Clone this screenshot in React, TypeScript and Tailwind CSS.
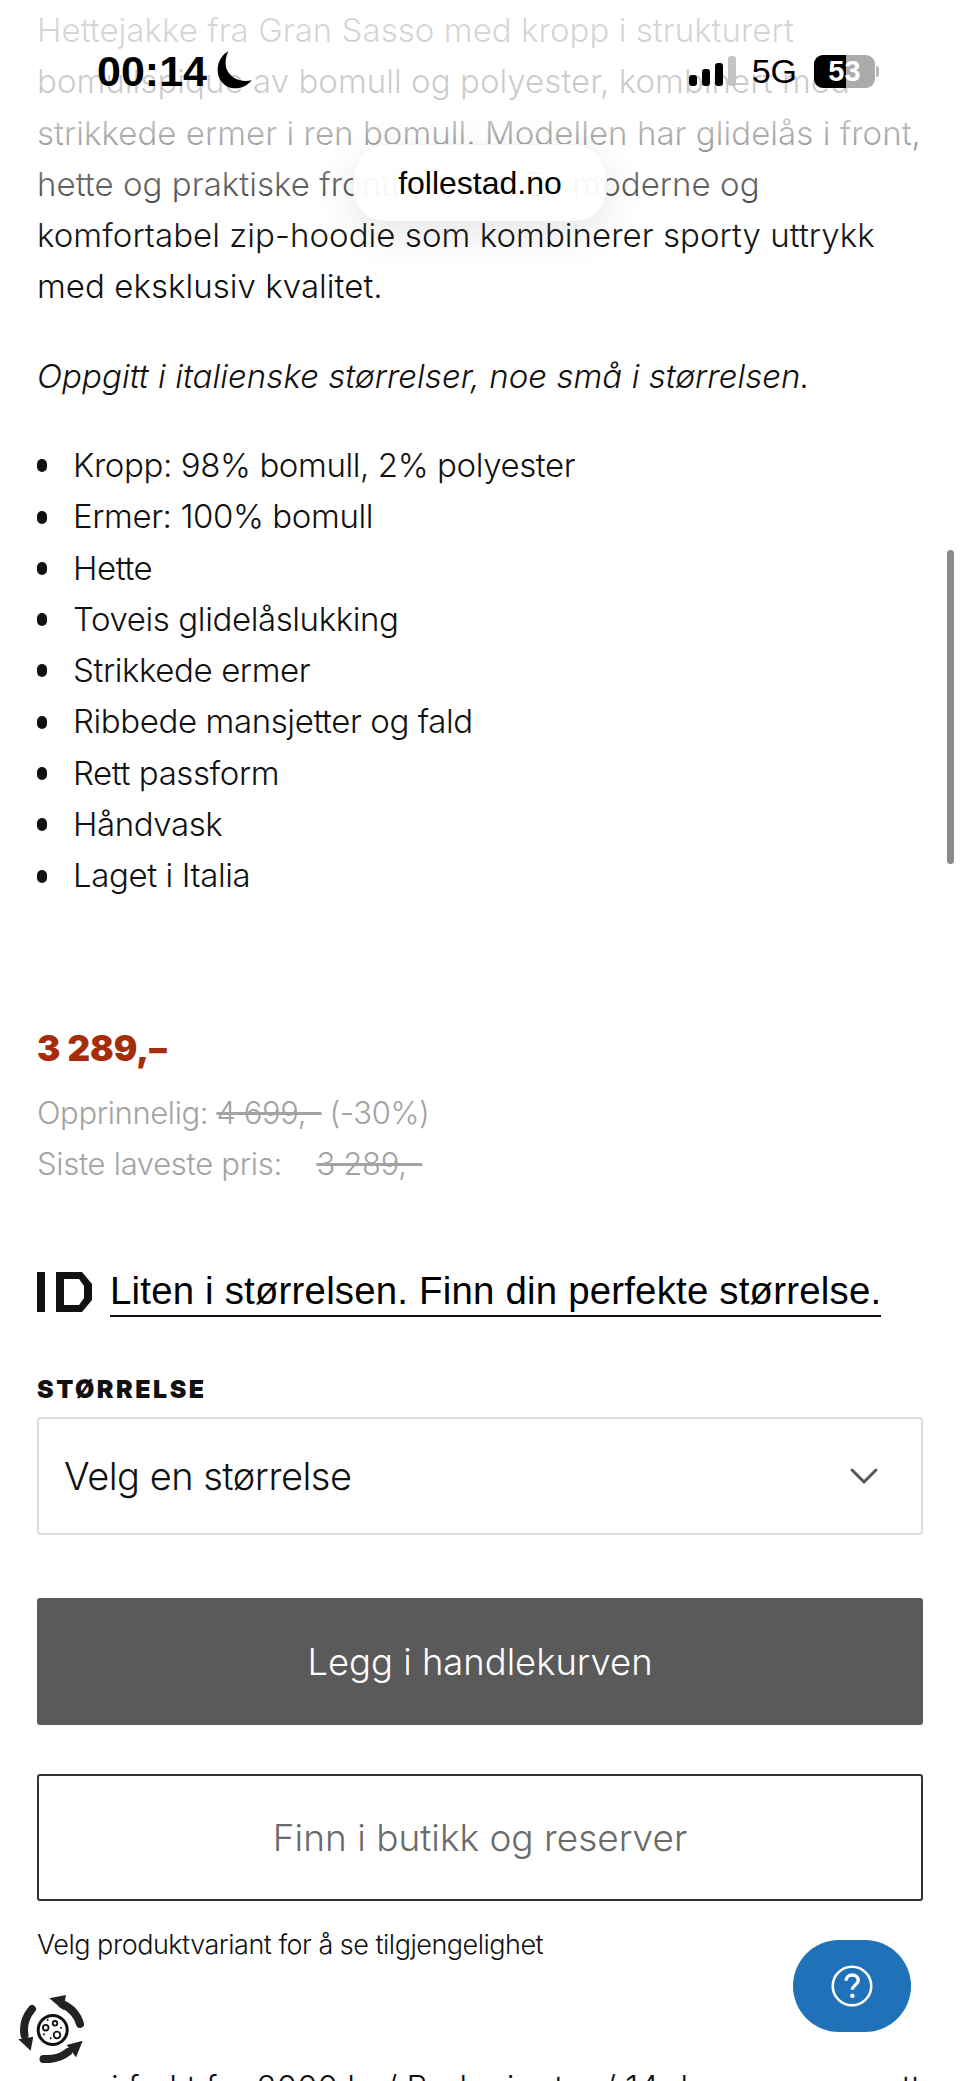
const bullets = [
  'Kropp: 98% bomull, 2% polyester',
  'Ermer: 100% bomull',
  'Hette',
  'Toveis glidelåslukking',
  'Strikkede ermer',
  'Ribbede mansjetter og fald',
  'Rett passform',
  'Håndvask',
  'Laget i Italia',
];

const RecycleIcon = () => (
  <svg width="66" height="68" viewBox="0 0 66 68" fill="none">
    <circle cx="34.7" cy="35" r="14.5" stroke="#111" strokeWidth="3" />
    <circle cx="27.7" cy="32.7" r="2.8" stroke="#111" strokeWidth="1.8" />
    <circle cx="37" cy="28.3" r="2.3" stroke="#111" strokeWidth="1.8" />
    <circle cx="39" cy="40" r="3.3" stroke="#111" strokeWidth="1.8" />
    <circle cx="29.7" cy="25" r="1" fill="#111" />
    <circle cx="43" cy="32.7" r="1" fill="#111" />
    <circle cx="32.7" cy="43.3" r="1" fill="#111" />
    <circle cx="26" cy="39.3" r="1" fill="#111" />
    <path d="M44 9 Q58 15 62 29" stroke="#222" strokeWidth="8" strokeLinecap="round" />
    <path d="M31.3 3.3 L48 0 L45.3 15 Z" fill="#222" />
    <path d="M14 14 Q4 26 6.5 40" stroke="#222" strokeWidth="8" strokeLinecap="round" />
    <path d="M0.3 44.3 L15.3 41.7 L12.7 55.7 Z" fill="#222" />
    <path d="M25.5 64 Q40 65 50 57" stroke="#222" strokeWidth="8" strokeLinecap="round" />
    <path d="M48.7 50 L64.7 45.7 L58 62.3 Z" fill="#222" />
  </svg>
);

export default function App() {
  return (
    <div className="relative h-[2081px] w-[960px] overflow-hidden bg-white font-['Inter',sans-serif] text-[#111]">
      <div className="px-[37px] pt-[5px]">
        <p className="text-[33px] leading-[51.3px] font-light tracking-[0.05px] whitespace-nowrap">
          Hettejakke fra Gran Sasso med kropp i strukturert
          <br />
          bomullspique av bomull og polyester, kombinert med
          <br />
          strikkede ermer i ren bomull. Modellen har glidelås i front,
          <br />
          hette og praktiske frontlommer. En moderne og
          <br />
          komfortabel zip-hoodie som kombinerer sporty uttrykk
          <br />
          med eksklusiv kvalitet.
        </p>
        <p className="mt-[38px] text-[33px] leading-[51.3px] font-light italic tracking-[0.05px] whitespace-nowrap">
          Oppgitt i italienske størrelser, noe små i størrelsen.
        </p>
        <ul className="mt-[38px]">
          {bullets.map((b) => (
            <li key={b} className="flex h-[51.3px] items-center text-[33px] font-light tracking-[-0.4px]">
              <span className="mr-[26px] h-[13px] w-[10px] rounded-full bg-[#111]" />
              {b}
            </li>
          ))}
        </ul>

        <div className="mt-[124px] text-[35px] leading-[44px] font-black text-[#a52d0c]">3 289,–</div>
        <div className="mt-[17px] text-[31px] leading-[51.3px] font-light tracking-[-0.4px] text-[#a3a3a3]">
          Opprinnelig: <span className="line-through">4 699,–</span> (-30%)
        </div>
        <div className="text-[31px] leading-[51.3px] font-light tracking-[-0.3px] text-[#a3a3a3]">
          Siste laveste pris: <span className="ml-[26px] line-through">3 289,–</span>
        </div>

        <div className="mt-[78px] flex items-center">
          <svg width="56" height="42" viewBox="0 0 56 42" className="mr-[17px] shrink-0">
            <rect x="0" y="1" width="8" height="40" fill="#111" />
            <path fillRule="evenodd" d="M19 1 H45 L55 13 V29 L45 41 H19 Z M27 8 V34 H42 L47 27 V15 L42 8 Z" fill="#111" />
          </svg>
          <span className="border-b-2 border-[#111] font-['Liberation_Sans',sans-serif] text-[38.4px] leading-[48px] tracking-[0.2px] whitespace-nowrap text-black">
            Liten i størrelsen. Finn din perfekte størrelse.
          </span>
        </div>

        <div className="mt-[57px] text-[25px] leading-[30px] font-black tracking-[2.5px] text-[#111]">STØRRELSE</div>
        <div className="mt-[13px] flex h-[118px] items-center justify-between rounded-[4px] border-2 border-[#dddddd] pr-[42px] pl-[25px] text-[38px] font-light tracking-[-0.5px]">
          Velg en størrelse
          <svg width="30" height="20" viewBox="0 0 30 20" fill="none">
            <path d="M3 4 L15 16 L27 4" stroke="#555" strokeWidth="3" strokeLinecap="round" />
          </svg>
        </div>
        <button className="mt-[63px] flex h-[127px] w-full items-center justify-center rounded-[3px] bg-[#5a5a5a] text-[36.4px] font-light text-white">
          Legg i handlekurven
        </button>
        <button className="mt-[49px] flex h-[127px] w-full items-center justify-center rounded-[3px] border-2 border-[#333] text-[37px] font-light text-[#6a6a6a]">
          Finn i butikk og reserver
        </button>
        <p className="mt-[24px] text-[27px] leading-[40px] font-light tracking-[-0.5px]">Velg produktvariant for å se tilgjengelighet</p>
        <p className="mt-[98px] pl-[74px] text-[33px] font-light whitespace-nowrap">i frakt fra 2000 kr / Bedre i retur / 14 dagers angrerett</p>
      </div>

      {/* scrollbar */}
      <div className="absolute top-[550px] right-[6px] h-[314px] w-[7px] rounded-full bg-[#8a8a8a]" />

      {/* safari top fade with status bar and url pill */}
      <div className="absolute inset-x-0 top-0 flex h-[240px] flex-col bg-gradient-to-b from-white/85 via-white/75 to-white/0 pt-[49px] font-['Liberation_Sans',sans-serif] text-black">
        <div className="flex h-[44px] items-center justify-between pr-[81px] pl-[97px]">
          <div className="flex items-center gap-[5px]">
            <span className="text-[43px] leading-[44px] font-bold">00:14</span>
            <svg width="42" height="42" viewBox="0 0 36 36">
              <path d="M14 1 C5 6 2 18 8 27 C14 35 27 35 34 26 C24 28 15 24 12 15 C11 10 12 5 14 1 Z" fill="#000" />
            </svg>
          </div>
          <div className="flex items-center">
            <svg width="48" height="30" viewBox="0 0 48 30">
              <rect x="1" y="19" width="8" height="11" rx="3" fill="#000" />
              <rect x="14" y="13" width="8" height="17" rx="3" fill="#000" />
              <rect x="27" y="7" width="8" height="23" rx="3" fill="#000" />
              <rect x="40" y="0" width="8" height="30" rx="3" fill="#c4c4c4" />
            </svg>
            <span className="ml-[16px] text-[34px] leading-[44px] font-medium">5G</span>
            <div className="relative ml-[17px] flex h-[33px] w-[61px] overflow-hidden rounded-[9px] bg-[#ababab]">
              <div className="h-full w-[32px] bg-black" />
              <span className="absolute inset-0 text-center text-[29px] leading-[33px] font-bold text-white">53</span>
            </div>
            <div className="ml-[1px] h-[11px] w-[3px] rounded-r-full bg-[#b5b5b5]" />
          </div>
        </div>
        <div className="mx-auto mt-[51px] flex h-[78px] w-[254px] items-center justify-center rounded-[32px] border border-[#f0f0f0] bg-white/95 text-[32px] shadow-[0_12px_40px_rgba(0,0,0,0.1)]">
          follestad.no
        </div>
      </div>

      {/* chat button */}
      <div className="absolute top-[1940px] left-[793px] flex h-[92px] w-[118px] items-center justify-center rounded-[46px] bg-[#1f72b8]">
        <svg width="44" height="44" viewBox="0 0 24 24" fill="none" stroke="white" strokeWidth="1.4">
          <circle cx="12" cy="12" r="10.5" />
          <path d="M8.8 9.2 C8.8 7.2 10.4 6 12.1 6 C14 6 15.4 7.3 15.4 9 C15.4 11.4 12.2 11.6 12.2 14" strokeWidth="1.8" />
          <circle cx="12.2" cy="17.3" r="1.2" fill="white" stroke="none" />
        </svg>
      </div>

      <div className="absolute top-[1995px] left-[18px]">
        <RecycleIcon />
      </div>
    </div>
  );
}
